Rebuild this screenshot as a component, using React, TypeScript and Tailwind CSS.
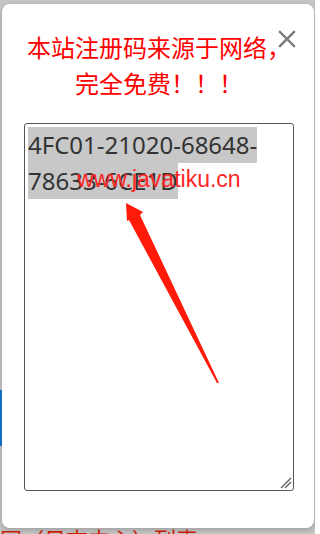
import React from "react";

const code = ["4FC01-21020-68648-", "78633-6CE1D"];

function CloseIcon() {
  return (
    <svg width="18" height="18" viewBox="0 0 18 18" fill="none">
      <path d="M2 2 L16 16 M16 2 L2 16" stroke="#7a7a7a" strokeWidth="2.4" strokeLinecap="square" />
    </svg>
  );
}

function Overlay() {
  // arrow + textarea resize grip, drawn over the code box
  return (
    <svg className="pointer-events-none absolute left-0 top-0" width="270" height="368" viewBox="0 0 270 368">
      <polygon points="102,80 119,89 116,92 195,260 193,260 105,97 103,98" fill="#ff1a0a" />
      <path d="M257 365 L267 355 M261 365 L267 359" stroke="#5a5a5a" strokeWidth="1.3" />
    </svg>
  );
}

export default function App() {
  return (
    <div className="flex h-[534px] w-[315px] flex-col overflow-hidden bg-[#c6c6c6] pt-[4px]">
      <div className="flex">
        <div className="w-[2px] shrink-0 pt-[386px]">
          <div className="h-[56px] bg-[#1976d2]" />
        </div>
        <div className="relative h-[524px] w-[312px] shrink-0 rounded-[8px] bg-white pl-[22px] pr-[20px] pt-[25px] shadow-[0_2px_6px_rgba(0,0,0,0.22)]">
          <button className="absolute right-[18px] top-[26px] flex items-center justify-center">
            <CloseIcon />
          </button>
          <h2
            className="text-center text-[24px] leading-[36px] font-normal text-[#ff0000]"
            style={{ fontFamily: '"Noto Sans CJK SC", "Noto Sans", sans-serif' }}
          >
            本站注册码来源于网络，
            <br />
            完全免费！！！
          </h2>
          <div className="relative mt-[22px] h-[368px] w-[270px]">
            <div
              className="h-full w-full rounded-[3px] border border-[#555] pl-[3px] pt-[3px] text-[24px] leading-[36px] text-[#333]"
              style={{ fontFamily: '"Noto Sans", sans-serif' }}
            >
              {code.map((line) => (
                <div key={line}>
                  <span className="inline-block h-[36px] bg-[#c8c8c8]">{line}</span>
                </div>
              ))}
            </div>
            <span
              className="absolute left-[53px] top-[45px] text-[23px] leading-none text-[#ff2626]"
              style={{ fontFamily: '"Liberation Sans", Arial, sans-serif' }}
            >
              www.javatiku.cn
            </span>
            <Overlay />
          </div>
        </div>
      </div>
      <p
        className="-mt-[1px] whitespace-nowrap text-[22px] leading-[22px] text-[#d81e06]"
        style={{ fontFamily: '"Noto Sans CJK SC", sans-serif' }}
      >
        网（日志中心）列表
      </p>
    </div>
  );
}
